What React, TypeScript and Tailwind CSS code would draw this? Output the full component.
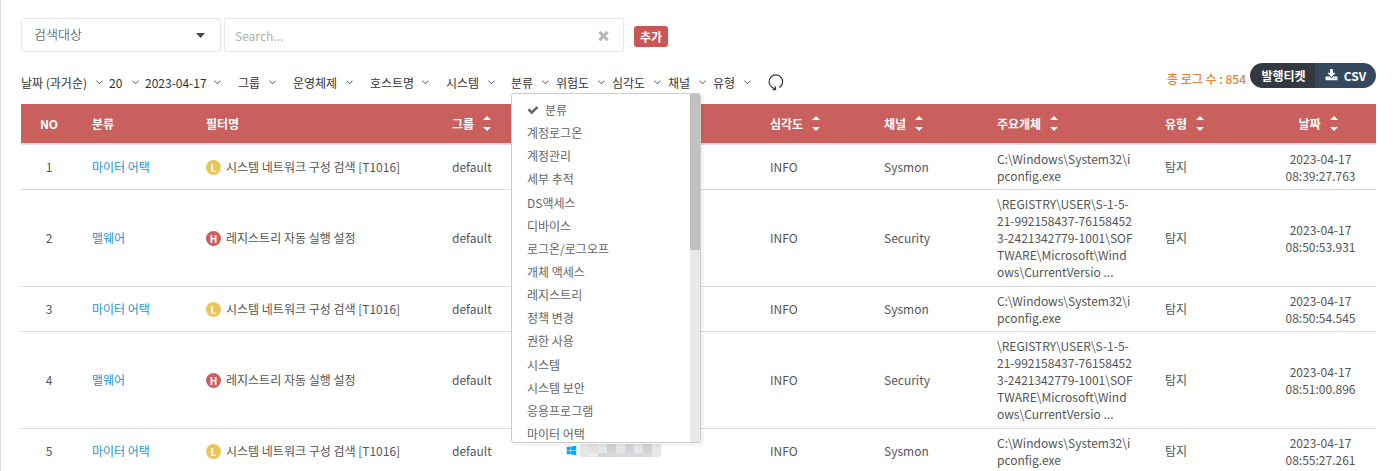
import React from "react";
import { FaWindows } from "react-icons/fa";

const icons = {
  check: "M1671 566q0 40-28 68l-724 724-136 136q-28 28-68 28t-68-28l-136-136-362-362q-28-28-28-68t28-68l136-136q28-28 68-28t68 28l294 295 656-657q28-28 68-28t68 28l136 136q28 28 28 68z",
  times: "M1490 1322q0 40-28 68l-136 136q-28 28-68 28t-68-28l-294-294-294 294q-28 28-68 28t-68-28l-136-136q-28-28-28-68t28-68l294-294-294-294q-28-28-28-68t28-68l136-136q28-28 68-28t68 28l294 294 294-294q28-28 68-28t68 28l136 136q28 28 28 68t-28 68l-294 294 294 294q28 28 28 68z",
  download: "M1344 1344q0-26-19-45t-45-19-45 19-19 45 19 45 45 19 45-19 19-45zm256 0q0-26-19-45t-45-19-45 19-19 45 19 45 45 19 45-19 19-45zm128-224v320q0 40-28 68t-68 28h-1472q-40 0-68-28t-28-68v-320q0-40 28-68t68-28h465l135 136q58 56 136 56t136-56l136-136h464q40 0 68 28t28 68zm-325-569q17 41-14 70l-448 448q-18 19-45 19t-45-19l-448-448q-31-29-14-70 17-39 59-39h256v-448q0-26 19-45t45-19h256q26 0 45 19t19 45v448h256q42 0 59 39z",
};

const menuItems = [
  "분류", "계정로그온", "계정관리", "세부 추적", "DS액세스", "디바이스", "로그온/로그오프", "개체 액세스",
  "레지스트리", "정책 변경", "권한 사용", "시스템", "시스템 보안", "응용프로그램", "마이터 어택",
];

const mosaic = [
  ["#e6e6e6", "#e2dfde", "#e2e6e9", "#d3d0cf", "#e5e6e4", "#d4d4d8", "#e3e5e7", "#d6d1cf", "#e2e6e9"],
  ["#e6e6e6", "#ececec", "#d6d7d9", "#d6d8da", "#d9dad9", "#d9d9d9", "#d9d9d9", "#dbd9d9", "#e6e8ea"],
];

type Log = { category: string; level: "L" | "H"; filter: string; channel: string; object: string; time: string };

const network = { category: "마이터 어택", level: "L" as const, filter: "시스템 네트워크 구성 검색 [T1016]", channel: "Sysmon", object: "C:\\Windows\\System32\\i\npconfig.exe" };
const registry = { category: "맬웨어", level: "H" as const, filter: "레지스트리 자동 실행 설정", channel: "Security", object: "\\REGISTRY\\USER\\S-1-5-\n21-992158437-76158452\n3-2421342779-1001\\SOF\nTWARE\\Microsoft\\Wind\nows\\CurrentVersio ..." };

const logs: Log[] = [
  { ...network, time: "08:39:27.763" },
  { ...registry, time: "08:50:53.931" },
  { ...network, time: "08:50:54.545" },
  { ...registry, time: "08:51:00.896" },
  { ...network, time: "08:55:27.261" },
];

function Icon({ name, className }: { name: keyof typeof icons; className: string }) {
  return (
    <svg className={className} viewBox="0 0 1792 1792" fill="currentColor" aria-hidden="true">
      <path d={icons[name]} />
    </svg>
  );
}

function Chevron() {
  return (
    <svg className="pointer-events-none col-start-1 row-start-1 justify-self-end" width="7" height="5" viewBox="0 0 7 5" fill="none" stroke="#555" aria-hidden="true">
      <path d="M0.4 0.6 3.5 3.8 6.6 0.6" />
    </svg>
  );
}

function Filter({ label, width }: { label: string; width: string }) {
  return (
    <div className={`grid shrink-0 items-center ${width}`}>
      <select aria-label={label} className="col-start-1 row-start-1 w-full appearance-none bg-transparent p-0 text-[#333] outline-none">
        <option>{label}</option>
      </select>
      <Chevron />
    </div>
  );
}

function CategoryFilter() {
  return (
    <div className="relative w-[38px] shrink-0">
      <button type="button" aria-haspopup="listbox" aria-expanded="true" className="grid w-full items-center text-left">
        <span className="col-start-1 row-start-1">분류</span>
        <Chevron />
      </button>
      <div className="absolute top-[19px] left-0 z-10 flex h-[350px] w-[190px] overflow-hidden rounded-[3px] border border-[#ccc] bg-white shadow-[3px_3px_0_rgba(0,0,0,0.04)]">
        <ul role="listbox" aria-label="분류" className="mt-[4px] grid h-[347px] grow auto-rows-fr pl-[15px] text-[#666]">
          {menuItems.map((item, i) => (
            <li key={item} role="option" aria-selected={i === 0} className="flex items-center gap-[6px]">
              {i === 0 && <Icon name="check" className="size-[12px]" />}
              {item}
            </li>
          ))}
        </ul>
        <div className="w-[10px] bg-[#e9e9e9]">
          <div className="h-[156px] bg-[#c1c1c1]" />
        </div>
      </div>
    </div>
  );
}

function SortHeader({ label, center = false }: { label: string; center?: boolean }) {
  return (
    <th className="pl-[15px] font-bold">
      <button type="button" className={`flex items-center gap-[9px] ${center ? "w-full justify-center pr-[20px]" : ""}`}>
        {label}
        <svg width="8" height="15" viewBox="0 0 8 15" fill="currentColor" aria-hidden="true">
          <path d="M0 4 4 0 8 4ZM0 11 4 15 8 11Z" />
        </svg>
      </button>
    </th>
  );
}

export default function App() {
  return (
    <main className="h-screen overflow-hidden border-l border-[#ddd] bg-white pt-[18px] pr-[18px] pl-[20px] font-['Noto_Sans_CJK_KR',sans-serif] text-[12px] leading-[17px] text-[#333]">
      <div className="flex h-[34px] items-center">
        <div className="grid h-full w-[200px] items-center">
          <select aria-label="검색대상" className="col-start-1 row-start-1 h-full w-full appearance-none rounded-[3px] border border-[#e7e7e7] bg-white px-[12px] pb-[3px] text-[13px] font-light text-[#333]">
            <option>검색대상</option>
          </select>
          <svg className="pointer-events-none col-start-1 row-start-1 mr-4 justify-self-end" width="9" height="5" viewBox="0 0 9 5" fill="#444" aria-hidden="true">
            <path d="M0 0H9L4.5 5Z" />
          </svg>
        </div>
        <div className="ml-[3px] flex h-full w-[400px] items-center rounded-[2px] border border-[#e7e7e7] px-[10px]">
          <input aria-label="Search" placeholder="Search..." className="min-w-0 grow text-[12px] outline-none placeholder:text-[#b0b0b0]" />
          <button type="button" aria-label="Clear" className="mr-[2px] text-[#b8b8b8]"><Icon name="times" className="size-[15px]" /></button>
        </div>
        <button type="button" className="mt-[3px] ml-[10px] h-[21px] w-[34px] rounded-[3px] bg-[#c95755] font-bold text-white">추가</button>
      </div>

      <div className="mt-[11px] flex h-[25px] justify-between">
        <div className="mt-[10px] flex h-[19px] items-center">
          <div className="flex gap-[6px]">
            <Filter label="날짜 (과거순)" width="w-[82px]" />
            <Filter label="20" width="w-[30px]" />
            <Filter label="2023-04-17" width="w-[76px]" />
          </div>
          <div className="ml-[17px] flex gap-[17px]">
            <Filter label="그룹" width="w-[38px]" />
            <Filter label="운영체제" width="w-[60px]" />
            <Filter label="호스트명" width="w-[59px]" />
            <Filter label="시스템" width="w-[49px]" />
          </div>
          <div className="ml-[16px] flex gap-[7px]">
            <CategoryFilter />
            <Filter label="위험도" width="w-[49px]" />
            <Filter label="심각도" width="w-[49px]" />
            <Filter label="채널" width="w-[38px]" />
            <Filter label="유형" width="w-[38px]" />
          </div>
          <button type="button" aria-label="새로고침" className="ml-[17px]">
            <svg width="16" height="17" viewBox="0 0 16 17" fill="none" stroke="#333" strokeWidth="1.2" aria-hidden="true">
              <path d="M11.4 13.5A6.8 6.8 0 1 0 4 13.3L7.4 15.4M4.6 15.8 7.6 15.5 7.2 12.3" />
            </svg>
          </button>
        </div>
        <div className="flex">
          <p className="mt-[7px] mr-[4px] font-medium text-[#ec8136]">총 로그 수 : 854</p>
          <div className="flex overflow-hidden rounded-full font-bold text-white">
            <button type="button" className="w-[65px] bg-[#343840] pl-[2px]">발행티켓</button>
            <button type="button" className="flex w-[61px] items-center justify-center gap-[6px] bg-[#34495e]">
              <Icon name="download" className="size-[13px]" />
              CSV
            </button>
          </div>
        </div>
      </div>

      <table className="mt-4 w-full table-fixed border-collapse text-left text-[#555]">
        <colgroup>
          <col className="w-[56px]" />
          <col className="w-[114px]" />
          <col />
          <col className="w-[114px]" />
          <col className="w-[204px]" />
          <col className="w-[114px]" />
          <col className="w-[113px]" />
          <col className="w-[168px]" />
          <col className="w-[115px]" />
          <col className="w-[111px]" />
        </colgroup>
        <thead>
          <tr className="h-[40px] border-b-2 border-[#ddd] bg-[#c9605d] text-white">
            <th className="text-center font-bold">NO</th>
            <th className="pl-[15px] font-bold">분류</th>
            <th className="pl-[15px] font-bold">필터명</th>
            <SortHeader label="그룹" />
            <td />
            <SortHeader label="심각도" />
            <SortHeader label="채널" />
            <SortHeader label="주요개체" />
            <SortHeader label="유형" />
            <SortHeader label="날짜" center />
          </tr>
        </thead>
        <tbody>
          {logs.map((log, i) => (
            <tr key={log.time} className={`border-b border-[#ddd] ${log.level === "H" ? "h-[97px]" : "h-[45px]"}`}>
              <td className="text-center">{i + 1}</td>
              <td className="pb-[1px] pl-[15px]"><a href="#" className="text-[#1e94d2]">{log.category}</a></td>
              <td className="pl-[15px]">
                <div className="flex items-center gap-[5px]">
                  <span className={`mt-[2px] grid size-[15px] place-items-center rounded-full text-[10px] leading-[15px] font-bold text-white ${log.level === "H" ? "bg-[#c9605d]" : "bg-[#eac55c]"}`}>{log.level}</span>
                  {log.filter}
                </div>
              </td>
              <td className="pl-[15px]">default</td>
              <td className="pl-[15px]">
                <div className="flex items-center gap-[3px]">
                  <FaWindows className="size-[11px] text-[#00adef]" aria-label="Windows" />
                  <svg width="81" height="13" aria-hidden="true">
                    {mosaic.map((row, y) => row.map((fill, x) => (
                      <rect key={`${x}-${y}`} x={x * 9} y={y * 9} width="9" height={y ? 4 : 9} fill={fill} />
                    )))}
                  </svg>
                </div>
              </td>
              <td className="pl-[15px]">INFO</td>
              <td className="pl-[15px]">{log.channel}</td>
              <td className="pl-[15px] whitespace-pre">{log.object}</td>
              <td className="pl-[15px]">탐지</td>
              <td className="text-center">2023-04-17<br />{log.time}</td>
            </tr>
          ))}
        </tbody>
      </table>
    </main>
  );
}
